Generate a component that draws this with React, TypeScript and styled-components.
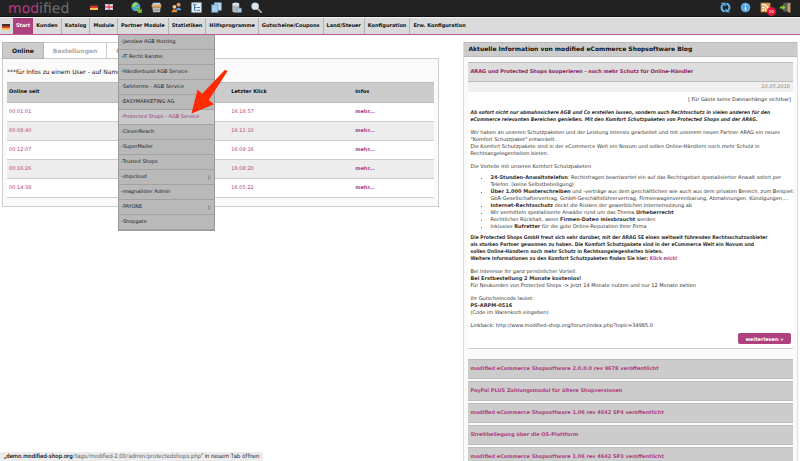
import React from "react";
import styled, { createGlobalStyle, css } from "styled-components";

const PINK = "#af417e";

const GlobalStyle = createGlobalStyle`
  *, *::before, *::after { box-sizing: border-box; }
  html { scrollbar-width: none; }
  body {
    margin: 0;
    background: #fff;
    color: #333;
    font: 5px/7px "DejaVu Sans", Verdana, sans-serif;
    text-rendering: geometricPrecision;
  }
  a { color: ${PINK}; text-decoration: none; }
  button { font-family: inherit; border: 0; padding: 0; margin: 0; cursor: pointer; }
  ul { list-style: none; margin: 0; padding: 0; }
  p, h1, h2, h3 { margin: 0; }
`;

/* ---------- header ---------- */

const Header = styled.header`
  display: flex;
  align-items: flex-start;
  height: 17px;
  padding: 0 9px 0 8px;
  background: #222;
  border-bottom: 1px solid #111;
`;

const Logo = styled.a`
  width: 82px;
  font-size: 14px;
  line-height: 18px;
  color: #6f6f6f;
  span { color: #b23c80; }
`;

const IconBar = styled.div<{ $gap: number; $left?: number }>`
  display: flex;
  align-items: center;
  height: 14px;
  gap: ${(p) => p.$gap}px;
  margin-left: ${(p) => p.$left ?? 0}px;
`;

const IconButton = styled.button`
  display: flex;
  position: relative;
  background: none;
`;

const Spacer = styled.div`
  flex: 1;
`;

const Badge = styled.span`
  position: absolute;
  left: 7px;
  top: 5px;
  width: 9px;
  height: 9px;
  border-radius: 50%;
  background: #e0143c;
  color: #fff;
  font-size: 4px;
  line-height: 9px;
  text-align: center;
`;

/* ---------- navigation ---------- */

const Nav = styled.nav`
  height: 18px;
  background: #dadada;
  border-top: 1px solid #f4f4f4;
  border-bottom: 1px solid #bd5a93;
`;

const NavList = styled.ul`
  display: flex;
  height: 100%;
`;

const NavItem = styled.li<{ $last?: boolean }>`
  position: relative;
  display: flex;
  ${(p) => !p.$last && css`border-right: 1px solid #b4b4b4;`}
`;

const NavLink = styled.a<{ $active?: boolean }>`
  display: flex;
  align-items: center;
  padding: 0 3px;
  font-weight: bold;
  white-space: nowrap;
  color: ${(p) => (p.$active ? "#fff" : "#111")};
  background: ${(p) => (p.$active ? PINK : "transparent")};
`;

const NavFlag = styled.a`
  display: flex;
  align-items: center;
  padding: 2px 3px 0 2px;
`;

const Menu = styled.ul`
  position: absolute;
  z-index: 2;
  top: 17px;
  left: 0;
  width: 97px;
  background: #b9b9b9;
  border: solid #999;
  border-width: 0 1px 1px;
`;

const MenuLink = styled.a<{ $hover?: boolean }>`
  display: flex;
  align-items: center;
  justify-content: space-between;
  height: 15px;
  padding: 0 2px;
  border-bottom: 1px solid #a2a2a2;
  color: ${(p) => (p.$hover ? "#943a78" : "#1c1c1c")};
  background: ${(p) => (p.$hover ? "#cacaca" : "transparent")};
  white-space: nowrap;
`;

const Pointer = styled.svg`
  position: absolute;
  z-index: 3;
  left: 72px;
  top: 51px;
  pointer-events: none;
`;

/* ---------- page body ---------- */

const Columns = styled.main`
  display: grid;
  grid-template-columns: minmax(0, 17fr) minmax(0, 13fr);
  gap: 24px;
  align-items: start;
  padding: 7px 2px 0;
`;

const Tabs = styled.div`
  display: flex;
  margin-bottom: -1px;
`;

const Tab = styled.button<{ $active?: boolean }>`
  height: 17px;
  padding: 0 9px;
  border: 1px solid ${(p) => (p.$active ? "#b4b4b4" : "#ccc")};
  border-left-width: ${(p) => (p.$active ? 1 : 0)}px;
  background: ${(p) => (p.$active ? "#ccc" : "#fff")};
  color: ${(p) => (p.$active ? "#111" : "#aaa")};
  font-size: 6px;
  line-height: 8px;
  font-weight: bold;
`;

const Panel = styled.section`
  padding: 10px 4px 8px;
  border: 1px solid #ccc;
  background: #fafafa;
`;

const Hint = styled.p`
  padding-bottom: 5px;
  font-size: 6px;
  line-height: 8px;
  color: #111;
`;

const Table = styled.table`
  width: 100%;
  table-layout: fixed;
  border-collapse: collapse;
`;

const Col = styled.col<{ $w: number }>`
  width: ${(p) => p.$w}%;
`;

const Th = styled.th`
  height: 20px;
  padding: 0 2px;
  text-align: left;
  color: #111;
  background: #ccc;
  border-top: 1px solid #bbb;
  border-bottom: 1px solid #bbb;
`;

const Row = styled.tr`
  background: #fff;
  &:nth-child(even) { background: #ededed; }
`;

const Td = styled.td`
  height: 19px;
  padding: 0 2px;
  border-bottom: 1px solid #ccc;
  color: ${PINK};
`;

const More = styled.a`
  font-weight: bold;
`;

/* ---------- news ---------- */

const News = styled.section`
  border: 1px solid #ddd;
  border-top: 0;
  background: #fafafa;
`;

const NewsHead = styled.h1`
  height: 15px;
  padding: 0 4px;
  border-top: 1px solid #bbb;
  border-bottom: 1px solid #bbb;
  background: #ccc;
  color: #111;
  font-size: 6px;
  line-height: 14px;
  white-space: nowrap;
`;

const NewsBody = styled.div`
  padding: 5px 4px;
`;

const Article = styled.article`
  margin-bottom: 10px;
  background: #fff;
  border-bottom: 1px solid #ccc;
`;

const ArticleTitle = styled.h2`
  padding: 0 2px;
  border-top: 1px solid #bbb;
  border-bottom: 1px solid #bbb;
  background: #ddd;
  font-size: 5px;
  line-height: 18px;
  a { color: #8a2464; }
`;

const DateLine = styled.p`
  padding: 0 3px;
  background: #f0f0f0;
  color: #888;
  font-style: italic;
  line-height: 10px;
  text-align: right;
`;

const ArticleBody = styled.div`
  display: flex;
  flex-direction: column;
  gap: 6px;
  padding: 5px 2px 4px;
  white-space: nowrap;
`;

const Notice = styled.p`
  text-align: right;
`;

const Strong = styled.p<{ $italic?: boolean }>`
  font-family: "DejaVu Sans Condensed", "DejaVu Sans", sans-serif;
  font-weight: bold;
  font-style: ${(p) => (p.$italic ? "italic" : "normal")};
`;

const BulletGroup = styled.div`
  display: flex;
  flex-direction: column;
  gap: 4px;
`;

const Bullets = styled.ul`
  padding-left: 20px;
  list-style: disc;
`;

const ReadMore = styled.button`
  align-self: flex-end;
  width: 53px;
  height: 11px;
  margin-top: -3px;
  border-radius: 2px;
  background: ${PINK};
  color: #fff;
  font-size: 5px;
  font-weight: bold;
`;

const Headlines = styled.ul`
  display: flex;
  flex-direction: column;
  gap: 2px;
`;

const Headline = styled.li`
  padding: 0 2px;
  border: 1px solid #bdbdbd;
  border-width: 1px 0;
  background: #ccc;
  font-weight: bold;
  line-height: 18px;
`;

const StatusBar = styled.output`
  position: fixed;
  z-index: 4;
  left: 0;
  bottom: 0;
  padding: 0 4px;
  border-radius: 0 2px 0 0;
  background: #ececec;
  color: #333;
  font: 6px/9px Roboto, "Liberation Sans", sans-serif;
  white-space: nowrap;
  b { font-weight: 500; color: #111; }
  span { color: #666; }
`;

/* ---------- drawings ---------- */

const GermanFlag = () => (
  <svg width="8" height="6" viewBox="0 0 8 6" aria-hidden="true">
    <path fill="#3a3030" d="M0 0h8v2H0z" />
    <path fill="#d8392b" d="M0 2h8v2H0z" />
    <path fill="#f0c352" d="M0 4h8v2H0z" />
  </svg>
);

const BritishFlag = () => (
  <svg width="8" height="6" viewBox="0 0 8 6" aria-hidden="true">
    <path fill="#7b8fc8" d="M0 0h8v6H0z" />
    <path stroke="#f2e8f0" strokeWidth="1.2" d="M0 0l8 6M8 0L0 6" />
    <path stroke="#fff" strokeWidth="2.4" d="M4 0v6M0 3h8" />
    <path stroke="#e0405a" strokeWidth="1.3" d="M4 0v6M0 3h8" />
  </svg>
);

const Icon = ({ children }: { children: React.ReactNode }) => (
  <svg width="11" height="11" viewBox="0 0 16 16" fill="none" aria-hidden="true">
    {children}
  </svg>
);

const toolIcons: { label: string; art: React.ReactNode }[] = [
  {
    label: "Shop",
    art: (
      <>
        <circle cx="7" cy="7" r="6.5" fill="#4a9fdc" />
        <path fill="#8ccf4d" d="M2 3c2-2 5-3 7-2l1 2-3 2-1 3-3-1-2 1zM8 8l4-1 1 3-3 4-2-2z" />
        <path fill="#d8f0c8" d="M4 3l3-1-1 2z" />
        <path stroke="#4db32c" strokeWidth="2.5" d="M9 9l5 5" />
        <path fill="#7bd03a" d="M15.500 9v6.500H9z" />
      </>
    ),
  },
  {
    label: "Bestellungen",
    art: (
      <>
        <path fill="#bcd5e8" d="M3 1h10l2 4H1z" />
        <path fill="#e9a05c" d="M1 4h14v4H1z" />
        <path fill="#bcbcbc" d="M2 8h12l-1 7H3z" />
        <path fill="#8a8a8a" d="M4 10h8v1H4zM4 12h8v1H4z" />
      </>
    ),
  },
  {
    label: "Kunden",
    art: (
      <>
        <circle cx="11" cy="4" r="3" fill="#d99a5c" />
        <path fill="#5d9fe0" d="M7 12c0-5 8-5 8 0z" />
        <circle cx="5" cy="7" r="2.800" fill="#efc48c" />
        <path fill="#e88a35" d="M1 15c0-6 8-6 8 0z" />
      </>
    ),
  },
  {
    label: "Kategorien",
    art: (
      <>
        <path fill="#e8f1f8" stroke="#9dbbd2" d="M1 1h14v14H1z" />
        <path stroke="#4379a8" strokeWidth="1.500" d="M3 4h5M5 5v7M5 8h3M5 12h3M9 8h4M9 12h4" />
      </>
    ),
  },
  {
    label: "Inhalte",
    art: (
      <>
        <path fill="#c4dcf0" stroke="#6fa5d3" d="M5 1h10v11H5z" />
        <path fill="#a9cdec" stroke="#5c96c8" d="M1 4h9v11H1z" />
      </>
    ),
  },
  {
    label: "Datenbank",
    art: (
      <>
        <path fill="#b9c0c6" d="M2 3v10c0 3 10 3 10 0V3z" />
        <ellipse cx="7" cy="3" rx="5" ry="2.200" fill="#dde2e6" />
        <path stroke="#8f989f" d="M2 7c1 2 9 2 10 0M2 10.500c1 2 9 2 10 0" />
        <path fill="#b5d0e6" stroke="#7895ad" d="M9 9h6v6H9z" />
      </>
    ),
  },
  {
    label: "Suche",
    art: (
      <>
        <path stroke="#a9a9a9" strokeWidth="2.500" strokeLinecap="round" d="M10 10l5 5" />
        <circle cx="6" cy="6" r="4.700" fill="#d4e8f8" stroke="#dcdcdc" strokeWidth="1.500" />
      </>
    ),
  },
];

const RefreshArt = () => (
  <Icon>
    <path stroke="#63b1ea" strokeWidth="3" d="M7 13.500C2 13 1 7 4 4M9 2.500c5 .5 6 6.500 3 9.500" />
    <path fill="#63b1ea" d="M1 1h7v6zM15 15H8V9z" />
  </Icon>
);

const InfoArt = () => (
  <Icon>
    <circle cx="8" cy="8" r="7" fill="#4c9bdc" />
    <circle cx="8" cy="8" r="5.500" stroke="#8cc3ec" />
    <path stroke="#fff" strokeWidth="2" d="M8 7v5M8 3.500v2" />
  </Icon>
);

const RssArt = () => (
  <Icon>
    <rect x="1" y="1" width="14" height="14" rx="1" fill="#e8954a" />
    <path stroke="#fff" strokeWidth="1.800" d="M3 7.500c3 0 5.500 2.500 5.500 5.500M3 3.500c5.500 0 9.500 4 9.500 9.500" />
    <circle cx="4.500" cy="11.500" r="1.500" fill="#fff" />
  </Icon>
);

const ExitArt = () => (
  <Icon>
    <path fill="#5b5b5b" d="M5 1h10v13H5z" />
    <path fill="#c4a06b" d="M11 2l4-1v15l-4-2z" />
    <path fill="#8ad12b" d="M8 8L4 4v2.500H0v3h4V12z" />
  </Icon>
);

const Triangle = () => (
  <svg width="4" height="5" viewBox="0 0 4 5" fill="none" aria-hidden="true">
    <path stroke="#8a8a8a" strokeWidth=".7" d="M.5.5l2.500 2-2.500 2z" />
  </svg>
);

/* ---------- data ---------- */

const modules: { name: string; sub?: boolean; hover?: boolean }[] = [
  { name: "Janolaw AGB Hosting" },
  { name: "IT Recht Kanzlei" },
  { name: "Händlerbund AGB Service" },
  { name: "Safeterms - AGB Service" },
  { name: "EASYMARKETING AG" },
  { name: "Protected Shops - AGB Service", hover: true },
  { name: "CleverReach" },
  { name: "SuperMailer" },
  { name: "Trusted Shops" },
  { name: "shipcloud", sub: true },
  { name: "magnalister Admin" },
  { name: "PAYONE", sub: true },
  { name: "Shopgate" },
];

const navEntries = [
  "Start",
  "Kunden",
  "Katalog",
  "Module",
  "Partner Module",
  "Statistiken",
  "Hilfsprogramme",
  "Gutscheine/Coupons",
  "Land/Steuer",
  "Konfiguration",
  "Erw. Konfiguration",
];

const visitors = [
  ["00:01:01", "16:18:57"],
  ["00:08:40", "16:11:10"],
  ["00:12:07", "16:09:16"],
  ["00:16:26", "16:08:20"],
  ["00:14:38", "16:05:22"],
];

const headlines = [
  "modified eCommerce Shopsoftware 2.0.0.0 rev 9678 veröffentlicht",
  "PayPal PLUS Zahlungsmodul für ältere Shopversionen",
  "modified eCommerce Shopsoftware 1.06 rev 4642 SP4 veröffentlicht",
  "Streitbeilegung über die OS-Plattform",
  "modified eCommerce Shopsoftware 1.06 rev 4642 SP3 veröffentlicht",
];

/* ---------- sections ---------- */

const TopBar = () => (
  <Header>
    <Logo href="#">
      <span>mod</span>ified
    </Logo>
    <IconBar $gap={7}>
      <IconButton aria-label="Deutsch"><GermanFlag /></IconButton>
      <IconButton aria-label="English"><BritishFlag /></IconButton>
    </IconBar>
    <IconBar $gap={9} $left={18}>
      {toolIcons.map((t) => (
        <IconButton key={t.label} aria-label={t.label}>
          <Icon>{t.art}</Icon>
        </IconButton>
      ))}
    </IconBar>
    <Spacer />
    <IconBar $gap={9}>
      <IconButton aria-label="Aktualisieren"><RefreshArt /></IconButton>
      <IconButton aria-label="Information"><InfoArt /></IconButton>
      <IconButton aria-label="Neuigkeiten">
        <RssArt />
        <Badge>20</Badge>
      </IconButton>
      <IconButton aria-label="Abmelden"><ExitArt /></IconButton>
    </IconBar>
  </Header>
);

const PartnerMenu = () => (
  <>
    <Menu>
      {modules.map((m) => (
        <li key={m.name}>
          <MenuLink href="#" $hover={m.hover}>
            -{m.name}
            {m.sub && <Triangle />}
          </MenuLink>
        </li>
      ))}
    </Menu>
    <Pointer width="40" height="46" viewBox="0 0 40 46" aria-hidden="true">
      <path fill="#ff2a04" d="M1.500 44.500L7.500 20.500l4.700 4.200L35 .8l2.500 1.400L18.800 31l5.200 4.200z" />
    </Pointer>
  </>
);

const MainNav = () => (
  <Nav>
    <NavList>
      <NavItem $last>
        <NavFlag href="#" aria-label="Deutsch"><GermanFlag /></NavFlag>
      </NavItem>
      {navEntries.map((name, i) => (
        <NavItem key={name} $last={i === 0 || i === navEntries.length - 1}>
          <NavLink href="#" $active={i === 0}>{name}</NavLink>
          {name === "Partner Module" && <PartnerMenu />}
        </NavItem>
      ))}
    </NavList>
  </Nav>
);

const OnlineUsers = () => (
  <div>
    <Tabs>
      <Tab $active>Online</Tab>
      <Tab>Bestellungen</Tab>
      <Tab>Kunden</Tab>
    </Tabs>
    <Panel>
      <Hint>***für Infos zu einem User - auf Namen klicken</Hint>
      <Table>
        <colgroup>
          <Col $w={52} />
          <Col $w={29} />
          <Col $w={19} />
        </colgroup>
        <thead>
          <tr>
            <Th>Online seit</Th>
            <Th>Letzter Klick</Th>
            <Th>Infos</Th>
          </tr>
        </thead>
        <tbody>
          {visitors.map(([since, last]) => (
            <Row key={since}>
              <Td>{since}</Td>
              <Td>{last}</Td>
              <Td><More href="#">mehr...</More></Td>
            </Row>
          ))}
        </tbody>
      </Table>
    </Panel>
  </div>
);

const Blog = () => (
  <News>
    <NewsHead>Aktuelle Information von modified eCommerce Shopsoftware Blog</NewsHead>
    <NewsBody>
      <Article>
        <ArticleTitle>
          <a href="#">ARAG und Protected Shops kooperieren - noch mehr Schutz für Online-Händler</a>
        </ArticleTitle>
        <DateLine>10.05.2016</DateLine>
        <ArticleBody>
          <Notice>[ Für Gäste keine Dateianhänge sichtbar]</Notice>
          <Strong $italic>
            Ab sofort nicht nur abmahnsichere AGB und Co erstellen lassen, sondern auch Rechtsschutz in vielen anderen für den
            <br />
            eCommerce relevanten Bereichen genießen. Mit den Komfort Schutzpaketen von Protected Shops und der ARAG.
          </Strong>
          <p>
            Wir haben an unseren Schutzpaketen und der Leistung intensiv gearbeitet und mit unserem neuen Partner ARAG ein neues
            <br />
            "Komfort Schutzpaket" entwickelt.
            <br />
            Die Komfort Schutzpakete sind in der eCommerce Welt ein Novum und sollen Online-Händlern noch mehr Schutz in
            <br />
            Rechtsangelegenheiten bieten.
          </p>
          <BulletGroup>
            <p>Die Vorteile mit unseren Komfort Schutzpaketen</p>
            <Bullets>
              <li>
                <b>24-Stunden-Anwaltstelefon</b>: Rechtsfragen beantwortet ein auf das Rechtsgebiet spezialisierter Anwalt sofort per
                <br />
                Telefon. (keine Selbstbeteiligung)
              </li>
              <li>
                <b>Über 1.000 Musterschreiben</b> und -verträge aus dem geschäftlichen wie auch aus dem privaten Bereich, zum Beispiel:
                <br />
                GbR-Gesellschaftervertrag, GmbH-Geschäftsführervertrag, Firmenwagenvereinbarung, Abmahnungen, Kündigungen,...
              </li>
              <li><b>Internet-Rechtsschutz</b> deckt die Risiken der gewerblichen Internetnutzung ab</li>
              <li>Wir vermitteln spezialisierte Anwälte rund um das Thema <b>Urheberrecht</b></li>
              <li>Rechtlicher Rückhalt, wenn <b>Firmen-Daten missbraucht</b> werden</li>
              <li>Inklusive <b>Rufretter</b> für die gute Online-Reputation Ihrer Firma</li>
            </Bullets>
            <Strong>
              Die Protected Shops GmbH freut sich sehr darüber, mit der ARAG SE einen weltweit führenden Rechtsschutzanbieter
              <br />
              als starken Partner gewonnen zu haben. Die Komfort Schutzpakete sind in der eCommerce Welt ein Novum und
              <br />
              sollen Online-Händlern noch mehr Schutz in Rechtsangelegenheiten bieten.
              <br />
              Weitere Informationen zu den Komfort Schutzpaketen finden Sie hier: <a href="#">Klick mich!</a>
            </Strong>
          </BulletGroup>
          <p>
            Bei Interesse Ihr ganz persönlicher Vorteil:
            <br />
            <b>Bei Erstbestellung 2 Monate kostenlos!</b>
            <br />
            Für Neukunden von Protected Shops -&gt; Jetzt 14 Monate nutzen und nur 12 Monate zahlen
          </p>
          <p>
            Ihr Gutscheincode lautet:
            <br />
            <b>PS-ARPM-0516</b>
            <br />
            (Code im Warenkorb eingeben)
          </p>
          <p>Linkback: http://www.modified-shop.org/forum/index.php?topic=34985.0</p>
          <ReadMore>weiterlesen »</ReadMore>
        </ArticleBody>
      </Article>
      <Headlines>
        {headlines.map((h) => (
          <Headline key={h}><a href="#">{h}</a></Headline>
        ))}
      </Headlines>
    </NewsBody>
  </News>
);

export default function App() {
  return (
    <>
      <GlobalStyle />
      <TopBar />
      <MainNav />
      <Columns>
        <OnlineUsers />
        <Blog />
      </Columns>
      <StatusBar>
        <b>„demo.modified-shop.org</b><span>/tags/modified-2.00/admin/protectedshops.php</span>“ in neuem Tab öffnen
      </StatusBar>
    </>
  );
}
